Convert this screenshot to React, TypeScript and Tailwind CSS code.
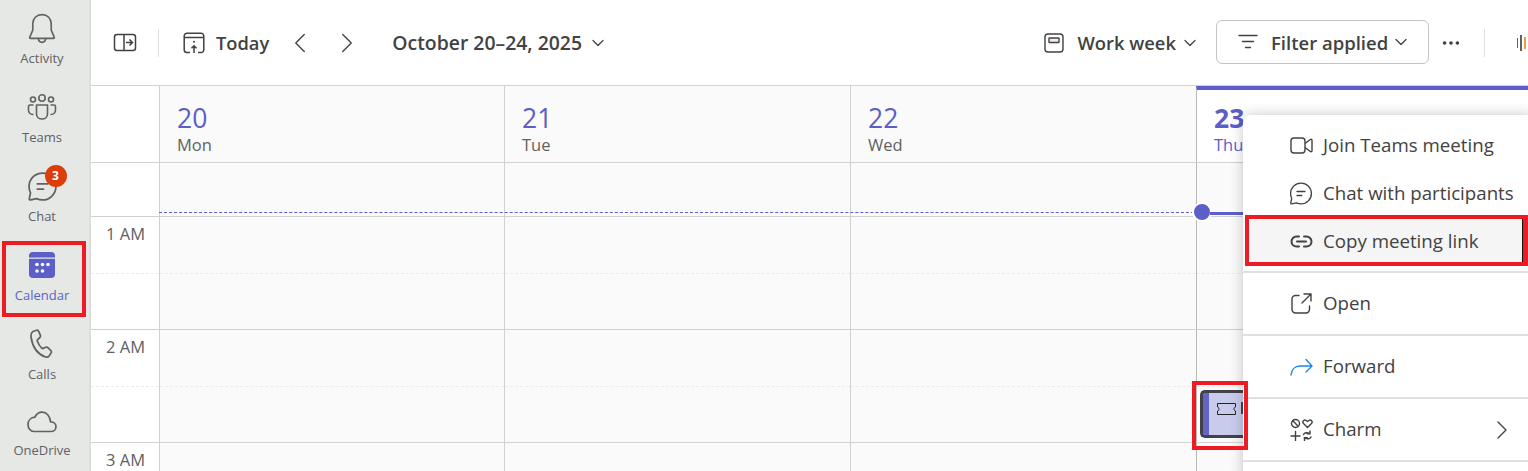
import React from 'react';
import { ChevronDown, ChevronLeft, ChevronRight, Ellipsis } from 'lucide-react';

const font = { fontFamily: '"Open Sans", "Noto Sans", sans-serif' };

const BellIcon = () => (
  <svg width="34" height="34" viewBox="0 0 28 28" fill="none" stroke="#616161" strokeWidth="1.350" strokeLinejoin="round">
    <path d="M14 3c-4.600 0-7.600 3.300-7.600 7.600v5.200L3.900 21.600c-.2.500.1 1 .6 1h19c.5 0 .8-.5.6-1l-2.500-5.800v-5.200C21.600 6.300 18.600 3 14 3Z" />
    <path d="M11 22.800c.2 1.900 1.400 3 3 3s2.800-1.100 3-3" />
  </svg>
);

const TeamsIcon = () => (
  <svg width="30" height="28" viewBox="0 0 30 28" fill="none" stroke="#616161" strokeWidth="1.600">
    <circle cx="15" cy="5" r="3.200" />
    <circle cx="6" cy="6.500" r="2.500" />
    <circle cx="24" cy="6.500" r="2.500" />
    <path d="M9.500 12h11v9c0 3-2.500 5-5.500 5s-5.500-2-5.500-5v-9Z" strokeLinejoin="round" />
    <path d="M6.500 12H3c-1 0-1.500.5-1.500 1.500V17c0 2.700 2 4.500 4.500 4.500h.5M23.500 12H27c1 0 1.500.5 1.500 1.500V17c0 2.700-2 4.500-4.500 4.500h-.5" />
  </svg>
);

const ChatIcon = ({ size = 31, color = '#616161' }: { size?: number; color?: string }) => (
  <svg width={size} height={size} viewBox="0 0 30 30" fill="none" stroke={color} strokeWidth="1.700" strokeLinecap="round">
    <path d="M15 2c7.200 0 13 5.800 13 13s-5.800 13-13 13c-2 0-4-.5-5.700-1.300L3.500 28c-.8.200-1.500-.5-1.300-1.300l1.200-5.500C2.500 19.300 2 17.200 2 15 2 7.800 7.800 2 15 2Z" strokeLinejoin="round" />
    <path d="M10 12.500h10M10 17.500h6" />
  </svg>
);

const CalendarIcon = () => (
  <svg width="26" height="26" viewBox="0 0 26 26">
    <path d="M4 0h18a4 4 0 0 1 4 4v1.500H0V4a4 4 0 0 1 4-4Z" fill="#5b5fc7" />
    <path d="M0 6.800h26V22a4 4 0 0 1-4 4H4a4 4 0 0 1-4-4V6.800Z" fill="#5b5fc7" />
    <g fill="#fff">
      <circle cx="8" cy="12.500" r="1.800" /><circle cx="13.500" cy="12.500" r="1.800" /><circle cx="19" cy="12.500" r="1.800" />
      <circle cx="8" cy="19" r="1.800" /><circle cx="13.500" cy="19" r="1.800" />
    </g>
  </svg>
);

const PhoneIcon = () => (
  <svg width="24" height="30" viewBox="0 0 24 30" fill="none" stroke="#616161" strokeWidth="1.700" strokeLinejoin="round">
    <path d="M3 2.500 6.500 1.300c1-.3 1.800.1 2.200 1l1.700 4c.3.800.1 1.600-.5 2.200L7.600 10.600c-.4.400-.5.800-.3 1.300.9 2.800 2.400 5.300 4.500 7.300.4.400.8.400 1.200.2l2.700-1.200c.8-.3 1.600-.2 2.200.4l3 3c.7.700.7 1.600.2 2.300l-1.800 2.800c-.9 1.300-2.300 1.800-3.800 1.300C8.300 25.500 2.700 18.600 1.100 8.500.7 5.800 1.300 3.500 3 2.500Z" />
  </svg>
);

const CloudIcon = () => (
  <svg width="30" height="22" viewBox="0 0 30 22" fill="none" stroke="#616161" strokeWidth="1.700" strokeLinejoin="round">
    <path d="M7 20.500h17c2.800 0 5-2.100 5-4.800 0-2.700-2.200-4.900-5-4.900h-.4C23 5.300 19.800 1.200 15.300 1.200c-3.400 0-6 1.900-7.300 5C3.800 6.500 1 9.500 1 13.500c0 4 2.700 7 6 7Z" />
  </svg>
);

const PanelIcon = () => (
  <svg width="24" height="20" viewBox="0 0 24 20" fill="none" stroke="#424242" strokeWidth="1.500">
    <rect x="1.500" y="1.500" width="21" height="16" rx="2.500" />
    <path d="M11 1.500v16" />
    <path d="M13 9.500h6.500M16.500 6.500l3 3-3 3" />
  </svg>
);

const TodayIcon = () => (
  <svg width="22" height="22" viewBox="0 0 22 22" fill="none" stroke="#424242" strokeWidth="1.500">
    <path d="M7 20.500H4A2.800 2.800 0 0 1 1.200 17.700V4A2.800 2.800 0 0 1 4 1.200h14A2.800 2.800 0 0 1 20.800 4v13.700a2.800 2.800 0 0 1-2.800 2.800h-3" />
    <path d="M1.200 5.500h19.600" />
    <path d="M11 21v-7M8.500 16.300 11 13.800l2.500 2.500" />
    <circle cx="11" cy="9.800" r="1" fill="#424242" stroke="none" />
  </svg>
);

const WorkWeekIcon = () => (
  <svg width="20" height="20" viewBox="0 0 20 20" fill="none" stroke="#424242" strokeWidth="1.400">
    <rect x="1" y="1" width="18" height="18" rx="3" />
    <rect x="5" y="5" width="10" height="4.500" rx=".5" fill="#fbe9e7" />
  </svg>
);

const FilterIcon = () => (
  <svg width="20" height="15" viewBox="0 0 20 15" fill="none" stroke="#424242" strokeWidth="1.400" strokeLinecap="round">
    <path d="M1 1.500h18M4.500 7.500h11M7.500 13.500h5" />
  </svg>
);

const VideoIcon = () => (
  <svg width="23" height="17" viewBox="0 0 23 17" fill="none" stroke="#424242" strokeWidth="1.400" strokeLinejoin="round">
    <rect x="1" y="1" width="14" height="15" rx="3" />
    <path d="M15 6.500 20.300 2.500c.6-.4 1.700-.1 1.700.8v10.400c0 .9-1.100 1.200-1.700.8L15 10.500" />
  </svg>
);

const LinkIcon = () => (
  <svg width="23" height="13" viewBox="0 0 23 13" fill="none" stroke="#424242" strokeWidth="2" strokeLinecap="round">
    <path d="M9 1.500H6.500a5 5 0 0 0 0 10H9M14 1.500h2.500a5 5 0 0 1 0 10H14M7 6.500h9" />
  </svg>
);

const OpenIcon = () => (
  <svg width="21" height="21" viewBox="0 0 21 21" fill="none" stroke="#424242" strokeWidth="1.400" strokeLinecap="round" strokeLinejoin="round">
    <path d="M8 2.500H4.500A3.500 3.500 0 0 0 1 6v10.500A3.500 3.500 0 0 0 4.500 20H15a3.500 3.500 0 0 0 3.500-3.500V13" />
    <path d="M13 1h7v7M20 1l-9 9" />
  </svg>
);

const ForwardIcon = () => (
  <svg width="23" height="18" viewBox="0 0 23 18" fill="none" stroke="#1b8ae0" strokeWidth="1.400" strokeLinecap="round" strokeLinejoin="round">
    <path d="M1 17c.5-5.500 4-9 9-9h12M16 1.500 22 8l-6 6" />
  </svg>
);

const CharmIcon = () => (
  <svg width="23" height="23" viewBox="0 0 23 23" fill="none" stroke="#424242" strokeWidth="1.400" strokeLinecap="round">
    <circle cx="5.500" cy="5.500" r="4" />
    <path d="M2.800 2.800l5.400 5.400" />
    <path d="M17.500 9.500 13.500 5.500c-1.800-2 .7-4.500 2.700-3l1.300 1 1.300-1c2-1.500 4.500 1 2.700 3Z" strokeLinejoin="round" />
    <path d="M1 18h9M5.500 13.500v9" />
    <path d="M13.500 16.500c.8-2 3.800-2.500 6-.9M20 13v2.800h-2.800M21 19c-.8 2-3.800 2.500-6 .9M14.500 22.500v-2.800h2.800" />
  </svg>
);

const TicketIcon = () => (
  <svg width="19" height="12" viewBox="0 0 19 12" fill="none" stroke="#242424" strokeWidth="1">
    <path d="M.5.500h18V4c-1 0-1.500 1-1.500 2s.5 2 1.500 2v3.500H.5V8c1 0 1.500-1 1.500-2S1.500 4 .5 4V.5Z" />
  </svg>
);

const navItems = [
  { label: 'Activity', icon: <BellIcon />, iconBox: 'h-[32px]' },
  { label: 'Teams', icon: <TeamsIcon />, iconBox: 'h-[32px]' },
  { label: 'Chat', icon: <ChatIcon />, iconBox: 'h-[32px]', badge: '3' },
  { label: 'Calendar', icon: <CalendarIcon />, iconBox: 'h-[32px]', active: true },
  { label: 'Calls', icon: <PhoneIcon />, iconBox: 'h-[32px]' },
  { label: 'OneDrive', icon: <CloudIcon />, iconBox: 'h-[29px]' },
];

const days = [
  { num: '20', name: 'Mon' },
  { num: '21', name: 'Tue' },
  { num: '22', name: 'Wed' },
  { num: '23', name: 'Thu', today: true },
];

const hours = ['1 AM', '2 AM', '3 AM'];

const Sidebar = () => (
  <div className="w-[91px] shrink-0 flex flex-col bg-[#e6e8e6] border-r-2 border-[#dcdedc] pt-[2px] pr-[5px]">
    {navItems.map((item) => (
      <div key={item.label} className="relative h-[79px] shrink-0 flex flex-col items-center justify-start pt-[10px]">
        <div className={`relative flex items-center justify-center ${item.iconBox}`}>
          {item.icon}
          {item.badge && (
            <span className="absolute -top-[5px] -right-[9px] w-[22px] h-[22px] rounded-full bg-[#dc3e0a] text-white text-[12px] font-bold flex items-center justify-center">
              {item.badge}
            </span>
          )}
        </div>
        <span className={`text-[13px] leading-[18px] mt-[5px] ${item.active ? 'text-[#5b5fc7]' : 'text-[#616161]'}`}>
          {item.label}
        </span>
      </div>
    ))}
  </div>
);

const Header = () => (
  <div className="h-[86px] shrink-0 flex items-center bg-white border-b border-[#d1d1d1] text-[#424242] overflow-hidden">
    <div className="w-[67px] flex justify-end pr-[21px]"><PanelIcon /></div>
    <div className="w-px h-[28px] bg-[#e0e0e0]" />
    <div className="ml-[24px]"><TodayIcon /></div>
    <span className="ml-[11px] text-[18.300px] font-semibold">Today</span>
    <ChevronLeft className="ml-[14px]" size={34} strokeWidth={0.950} color="#424242" />
    <ChevronRight className="ml-[13px]" size={34} strokeWidth={0.950} color="#424242" />
    <span className="ml-[28px] text-[19.400px] font-semibold">October 20–24, 2025</span>
    <ChevronDown className="ml-[6px]" size={20} strokeWidth={1.500} color="#424242" />
    <div className="ml-auto flex items-center">
      <WorkWeekIcon />
      <span className="ml-[13px] text-[18.400px] font-semibold">Work week</span>
      <ChevronDown className="ml-[4px]" size={20} strokeWidth={1.500} color="#424242" />
      <div className="ml-[16px] mb-[2px] h-[44px] w-[213px] shrink-0 rounded-[6px] border border-[#c4c4c4] flex items-center pl-[21px]">
        <FilterIcon />
        <span className="ml-[13px] mt-[2px] text-[18.500px] font-semibold">Filter applied</span>
        <ChevronDown className="ml-[3px]" size={20} strokeWidth={1.500} color="#424242" />
      </div>
      <Ellipsis className="ml-[11px]" size={22} strokeWidth={2} color="#424242" />
      <div className="ml-[22px] w-px h-[28px] bg-[#e0e0e0]" />
      <div className="ml-[32px] w-[11px] flex items-center gap-[2px] overflow-hidden">
        <span className="w-[1px] h-[10px] bg-[#616161]" />
        <span className="w-[2px] h-[16px] bg-[#616161]" />
        <span className="w-[2px] h-[12px] bg-[#e8a33d]" />
      </div>
    </div>
  </div>
);

const gridCols = 'grid grid-cols-[68px_345px_346px_346px_1fr]';

const DayHead = ({ num, name, today }: { num: string; name: string; today?: boolean }) => (
  <div className={`border-l pl-[17px] ${today ? 'bg-white border-[#b8b8b8] border-t-4 border-t-[#5b5fc7] pt-[12px]' : 'bg-[#fafafa] border-[#d1d1d1] pt-[16px]'}`}>
    <div className={`text-[26.500px] leading-[32px] text-[#5b5fc7] ${today ? 'font-bold' : ''}`}>{num}</div>
    <div className={`text-[16.500px] leading-[20px] mt-[1px] ${today ? 'text-[#5b5fc7]' : 'text-[#616161]'}`}>{name}</div>
  </div>
);

const CalendarGrid = () => (
  <div className="flex-1 flex flex-col bg-white overflow-hidden">
    <div className={`${gridCols} h-[77px] shrink-0 border-b border-[#d1d1d1]`}>
      <div />
      {days.map((d) => <DayHead key={d.num} {...d} />)}
    </div>
    <div className={`${gridCols} h-[54px] shrink-0 border-b border-[#d1d1d1]`}>
      <div />
      {days.map((d) => (
        <div key={d.num} className={`border-l bg-[#fafafa] ${d.today ? 'border-[#b8b8b8]' : 'border-[#d1d1d1]'}`} />
      ))}
    </div>
    {hours.map((h) => (
      <div key={h} className={`${gridCols} h-[113px] shrink-0 border-b border-[#d1d1d1]`}>
        <div className="text-[16.500px] leading-[20px] text-[#616161] text-right pr-[14px] pt-[7px] h-[57px] border-b border-dashed border-[#ebebeb]">{h}</div>
        {days.map((d) => (
          <div key={d.num} className={`border-l bg-[#fafafa] ${d.today ? 'border-[#b8b8b8]' : 'border-[#d1d1d1]'}`}>
            <div className="h-[57px] border-b border-dashed border-[#ebebeb]" />
          </div>
        ))}
      </div>
    ))}
  </div>
);

const MenuItem = ({ icon, label, arrow }: { icon: React.ReactNode; label: string; arrow?: boolean }) => (
  <div className="flex items-center h-full pl-[46px] text-[18.700px] text-[#424242]">
    <div className="w-[24px] flex justify-center">{icon}</div>
    <span className="ml-[10px]">{label}</span>
    {arrow && <ChevronRight className="ml-auto mr-[15px]" size={32} strokeWidth={1} color="#424242" />}
  </div>
);

const ContextMenu = () => (
  <div className="absolute left-[1243px] top-[115px] w-[290px] h-[370px] bg-white rounded-l-[8px] shadow-[0_0_14px_rgba(0,0,0,0.22)] flex flex-col">
    <div className="h-[54px] pt-[6px]"><MenuItem icon={<VideoIcon />} label="Join Teams meeting" /></div>
    <div className="h-[48px]"><MenuItem icon={<ChatIcon size={25} color="#424242" />} label="Chat with participants" /></div>
    <div className="h-[48px] bg-[#f5f5f5]"><MenuItem icon={<LinkIcon />} label="Copy meeting link" /></div>
    <div className="mt-[6px] border-t-2 border-[#e0e0e0] h-[63px]"><MenuItem icon={<OpenIcon />} label="Open" /></div>
    <div className="border-t-2 border-[#e0e0e0] h-[63px]"><MenuItem icon={<ForwardIcon />} label="Forward" /></div>
    <div className="border-t-2 border-[#e0e0e0] h-[63px]"><MenuItem icon={<CharmIcon />} label="Charm" arrow /></div>
    <div className="border-t-2 border-[#e0e0e0]" />
  </div>
);

const App = () => (
  <div className="relative w-[1528px] h-[471px] overflow-hidden flex bg-white" style={font}>
    <Sidebar />
    <div className="flex-1 min-w-0 flex flex-col">
      <Header />
      <CalendarGrid />
    </div>

    {/* current time line */}
    <div className="absolute left-[159px] top-[212px] w-[1040px] border-t border-dashed border-[#5b5fc7]" />
    <div className="absolute left-[1192px] top-[202px] w-[20px] h-[20px] rounded-full bg-[#5b5fc7] border-2 border-white" />
    <div className="absolute left-[1210px] top-[212px] w-[34px] h-[3px] bg-[#5b5fc7]" />

    {/* event peeking out under the menu */}
    <div className="absolute left-[1200px] top-[390px] w-[50px] h-[48px] rounded-[5px] border-[3px] border-[#424248] border-r-0 bg-[#c8cbeb] overflow-hidden flex items-start">
      <div className="w-[6px] h-full bg-[#6264c7]" />
      <div className="ml-[8px] mt-[10px]"><TicketIcon /></div>
      <div className="ml-[5px] mt-[9px] w-[4px] h-[12px] bg-[#424248]" />
    </div>

    <ContextMenu />

    {/* red highlight boxes */}
    <div className="absolute left-[2px] top-[241px] w-[84px] h-[76px] border-[4px] border-[#ed1c24]" />
    <div className="absolute left-[1245px] top-[215px] w-[283px] h-[51px] border-[4px] border-r-[5px] border-[#ed1c24] shadow-[inset_-1px_0_0_#111]" />
    <div className="absolute left-[1192px] top-[381px] w-[56px] h-[69px] border-[4px] border-[#ed1c24]" />
  </div>
);

export default App;
